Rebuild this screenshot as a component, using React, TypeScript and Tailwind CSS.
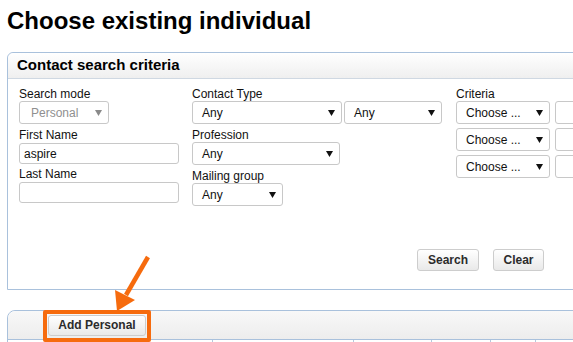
import React from "react";

const Arrow = ({ gray = false }: { gray?: boolean }) => (
  <svg width="7" height="6" viewBox="0 0 7 6" className="shrink-0">
    <polygon points="0,0 7,0 3.5,6" fill={gray ? "#8a8a8a" : "#111"} />
  </svg>
);

const Select = ({
  text,
  w,
  disabled = false,
  pl = "pl-[9px]",
}: {
  text: string;
  w: string;
  disabled?: boolean;
  pl?: string;
}) => (
  <div
    className={`${w} h-[23px] ${pl} pr-[6px] flex items-center justify-between border border-[#c8c8c8] rounded-[3px] bg-white text-[12px] ${
      disabled ? "text-[#8f8f8f]" : "text-[#111]"
    }`}
  >
    <span>{text}</span>
    <Arrow gray={disabled} />
  </div>
);

const Input = ({ value = "", w }: { value?: string; w: string }) => (
  <div
    className={`${w} h-[21px] pl-[4px] flex items-center border border-[#c8c8c8] rounded-[3px] bg-white text-[12px] text-[#111]`}
  >
    {value}
  </div>
);

const Label = ({ children, mt = "" }: { children: React.ReactNode; mt?: string }) => (
  <div className={`h-[14px] leading-[14px] text-[12px] text-[#111] ${mt}`}>{children}</div>
);

const Button = ({ children, w }: { children: React.ReactNode; w: string }) => (
  <div
    className={`${w} h-[22px] flex items-center justify-center border border-[#cdcdcd] rounded-[3px] bg-gradient-to-b from-white to-[#e9e9e9] text-[12px] font-bold text-[#2b2b2b]`}
  >
    {children}
  </div>
);

export default function App() {
  return (
    <div
      className="relative w-[573px] h-[342px] overflow-hidden bg-white"
      style={{ fontFamily: '"Liberation Sans", Arial, sans-serif' }}
    >
      <h1 className="ml-[7px] mt-[7px] text-[24px] leading-[28px] font-bold text-black">
        Choose existing individual
      </h1>

      {/* Panel 1 */}
      <div className="mt-[17px] ml-[7px] w-[700px] border border-[#a9c1dc] rounded-tl-[6px]">
        <div className="h-[26px] pl-[9px] flex items-center border-b border-[#cfd8e2] bg-gradient-to-b from-white to-[#efefef] rounded-tl-[6px] text-[15px] font-bold text-black">
          Contact search criteria
        </div>
        <div className="h-[210px] pt-[8px] pl-[11px] flex flex-col">
          <div className="flex items-start">
            {/* column 1 */}
            <div className="w-[173px] flex flex-col">
              <Label>Search mode</Label>
              <Select text="Personal" w="w-[90px]" disabled pl="pl-[11px]" />
              <Label mt="mt-[4px]">First Name</Label>
              <div className="mt-[1px]">
                <Input value="aspire" w="w-[160px]" />
              </div>
              <Label mt="mt-[3px]">Last Name</Label>
              <div className="mt-[1px]">
                <Input w="w-[160px]" />
              </div>
            </div>
            {/* column 2 */}
            <div className="w-[264px] flex flex-col">
              <Label>Contact Type</Label>
              <div className="flex gap-[2px]">
                <Select text="Any" w="w-[150px]" />
                <Select text="Any" w="w-[98px]" />
              </div>
              <Label mt="mt-[4px]">Profession</Label>
              <Select text="Any" w="w-[148px]" />
              <Label mt="mt-[4px]">Mailing group</Label>
              <Select text="Any" w="w-[91px]" />
            </div>
            {/* column 3 */}
            <div className="flex flex-col">
              <Label>Criteria</Label>
              <div className="flex flex-col gap-[4px]">
                {[0, 1, 2].map((i) => (
                  <div key={i} className="flex gap-[5px]">
                    <Select text="Choose ..." w="w-[94px]" />
                    <div className="w-[60px] h-[23px] border border-[#c8c8c8] rounded-[3px] bg-white" />
                  </div>
                ))}
              </div>
            </div>
          </div>
          <div className="mt-[43px] pl-[398px] flex gap-[14px]">
            <Button w="w-[62px]">Search</Button>
            <Button w="w-[51px]">Clear</Button>
          </div>
        </div>
      </div>

      {/* Panel 2 */}
      <div className="mt-[20px] ml-[7px] w-[700px] border border-[#a9c1dc] rounded-tl-[8px]">
        <div className="h-[29px] flex items-center border-b border-[#a9c1dc] bg-gradient-to-b from-[#f8f8f8] to-[#ededed] rounded-tl-[8px]">
          <div className="ml-[40px]">
            <div className="w-[98px] h-[21px] flex items-center justify-center border border-[#cdcdcd] rounded-[3px] bg-gradient-to-b from-white to-[#e9e9e9] text-[12px] font-bold text-[#2b2b2b]">
              Add Personal
            </div>
          </div>
        </div>
        <div className="flex h-[10px]">
          <div className="w-[204px]" />
          <div className="w-[141px] border-l border-[#b5c8de]" />
          <div className="w-[78px] border-l border-[#b5c8de]" />
          <div className="w-[59px] border-l border-[#b5c8de]" />
          <div className="w-[45px] border-l border-[#b5c8de]" />
          <div className="flex-1 border-l border-[#b5c8de]" />
        </div>
      </div>

      {/* Annotation overlay */}
      <div className="absolute left-[43px] top-[310px] w-[108px] h-[32px] border-[4px] border-[#f66b0e] rounded-[2px]" />
      <svg className="absolute left-0 top-0" width="573" height="342" viewBox="0 0 573 342">
        <line x1="148" y1="257" x2="126" y2="295" stroke="#f66b0e" strokeWidth="4.5" />
        <polygon points="117,311 115,290 135,300" fill="#f66b0e" />
      </svg>
    </div>
  );
}
